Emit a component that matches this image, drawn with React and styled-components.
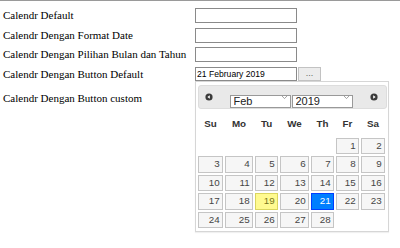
import React from "react";
import styled, { createGlobalStyle } from "styled-components";

const GlobalStyle = createGlobalStyle`
  html, body { margin: 0; padding: 0; background: #fff; }
  body { border-top: 1px solid #9a9a9a; font-family: "Liberation Serif", serif; }
  * { box-sizing: border-box; }
`;

const Page = styled.div`
  position: relative;
  height: 247px;
  padding-top: 7px;
`;

const Form = styled.div`
  display: grid;
  grid-template-columns: 195px auto;
  grid-template-rows: 15px 15px 15px 15px 23px;
  row-gap: 4.67px;
  align-items: center;
  justify-content: start;
`;

const Label = styled.div`
  padding-left: 3px;
  font-family: "Liberation Serif", "Times New Roman", serif;
  font-size: 11px;
  line-height: 11px;
  color: #000;
  white-space: nowrap;
`;

const Field = styled.div`
  display: flex;
  align-items: center;
  gap: 1px;
  height: 100%;
`;

const TextInput = styled.input`
  width: 102px;
  height: ${(p) => p.$h || 15}px;
  margin: 0;
  padding: 0 1px;
  border: 1px solid #8a8a8a;
  background: #fff;
  font-family: "Liberation Sans", Arial, sans-serif;
  font-size: 8.6px;
  color: #000;
  outline: none;
`;

const DotsButton = styled.button`
  width: 23px;
  height: 14px;
  margin: 0;
  padding: 0 0 2px;
  border: 1px solid #c2c2c2;
  background: #ececec;
  color: #666;
  font-family: "Liberation Sans", Arial, sans-serif;
  font-size: 9px;
  line-height: 9px;
  display: flex;
  align-items: flex-end;
  justify-content: center;
`;

const Popup = styled.div`
  position: absolute;
  left: 195px;
  top: 80px;
  width: 194px;
  border: 1px solid #d6d6d6;
  box-shadow: 0 1px 1px rgba(0, 0, 0, 0.06);
  background: #fff;
  padding: 3px 1px 3px 2px;
  font-family: "Liberation Sans", Arial, sans-serif;
`;

const Header = styled.div`
  height: 24px;
  border: 1px solid #dddddd;
  border-radius: 3px;
  background: #e9e9e9;
  display: flex;
  align-items: center;
  justify-content: space-between;
  padding: 0 8.5px 0 5.5px;
`;

const NavIcon = styled.svg`
  width: 8px;
  height: 8px;
  display: block;
`;

const SelectGroup = styled.div`
  display: flex;
  gap: 1px;
`;

const SelectWrap = styled.div`
  position: relative;
  width: 61px;
  height: 13px;
`;

const Select = styled.select`
  appearance: none;
  -webkit-appearance: none;
  width: 100%;
  height: 100%;
  margin: 0;
  padding: 0 0 0 3px;
  border: 1px solid #999;
  border-radius: 0;
  background: #fff;
  color: #222;
  font-family: "Liberation Sans", Arial, sans-serif;
  font-size: 11px;
  line-height: 11px;
  outline: none;
`;

const Chevron = styled.svg`
  position: absolute;
  right: 4px;
  top: 5px;
  width: 5px;
  height: 3px;
  pointer-events: none;
  overflow: visible;
`;

const WeekRow = styled.div`
  display: grid;
  grid-template-columns: 25px 28px 23px 29px 23px 23px 24px;
  column-gap: 2px;
  height: 28.5px;
  align-items: center;
`;

const WeekDay = styled.div`
  text-align: center;
  font-size: 9.8px;
  font-weight: bold;
  color: #333;
  padding-top: 1px;
`;

const DayGrid = styled.div`
  display: grid;
  grid-template-columns: 25px 28px 23px 29px 23px 23px 24px;
  grid-auto-rows: 16.5px;
  gap: 2px;
`;

const Day = styled.div`
  border: 1px solid ${(p) => (p.$active ? "#003eff" : p.$today ? "#dad55e" : "#c5c5c5")};
  background: ${(p) => (p.$active ? "#007fff" : p.$today ? "#fffa90" : "#f6f6f6")};
  color: ${(p) => (p.$active ? "#fff" : p.$today ? "#777620" : "#454545")};
  font-size: 9.8px;
  line-height: 14.5px;
  text-align: right;
  padding: 0 2.3px;
`;

const Blank = styled.div``;

const NavButton = ({ dir }) => (
  <NavIcon viewBox="0 0 8 8">
    <circle cx="4" cy="4" r="3.6" fill="#3a3a3a" />
    {dir === "prev" ? (
      <polygon points="2.4,4 4.8,2.3 4.8,5.7" fill="#fff" />
    ) : (
      <polygon points="5.6,4 3.2,2.3 3.2,5.7" fill="#fff" />
    )}
  </NavIcon>
);

const DropSelect = ({ value, options }) => (
  <SelectWrap>
    <Select defaultValue={value}>
      {options.map((o) => (
        <option key={o}>{o}</option>
      ))}
    </Select>
    <Chevron viewBox="0 0 5 3">
      <polyline points="0,0 2.5,2.6 5,0" fill="none" stroke="#8a8a8a" strokeWidth="0.8" />
    </Chevron>
  </SelectWrap>
);

const months = ["Jan", "Feb", "Mar", "Apr", "May", "Jun", "Jul", "Aug", "Sep", "Oct", "Nov", "Dec"];
const years = ["2009", "2010", "2011", "2012", "2013", "2014", "2015", "2016", "2017", "2018", "2019", "2020"];
const weekdays = ["Su", "Mo", "Tu", "We", "Th", "Fr", "Sa"];

export default function App() {
  const cells = [];
  for (let i = 0; i < 5; i++) cells.push(<Blank key={"b" + i} />);
  for (let d = 1; d <= 28; d++) {
    cells.push(
      <Day key={d} $today={d === 19} $active={d === 21}>
        {d}
      </Day>
    );
  }

  return (
    <>
      <GlobalStyle />
      <Page>
        <Form>
          <Label>Calendr Default</Label>
          <Field>
            <TextInput type="text" />
          </Field>
          <Label>Calendr Dengan Format Date</Label>
          <Field>
            <TextInput type="text" />
          </Field>
          <Label>Calendr Dengan Pilihan Bulan dan Tahun</Label>
          <Field>
            <TextInput type="text" />
          </Field>
          <Label>Calendr Dengan Button Default</Label>
          <Field>
            <TextInput type="text" $h={14} defaultValue="21 February 2019" />
            <DotsButton>...</DotsButton>
          </Field>
          <Label>Calendr Dengan Button custom</Label>
          <Field>
            <TextInput type="text" />
          </Field>
        </Form>

        <Popup>
          <Header>
            <NavButton dir="prev" />
            <SelectGroup>
              <DropSelect value="Feb" options={months} />
              <DropSelect value="2019" options={years} />
            </SelectGroup>
            <NavButton dir="next" />
          </Header>
          <WeekRow>
            {weekdays.map((w) => (
              <WeekDay key={w}>{w}</WeekDay>
            ))}
          </WeekRow>
          <DayGrid>{cells}</DayGrid>
        </Popup>
      </Page>
    </>
  );
}
